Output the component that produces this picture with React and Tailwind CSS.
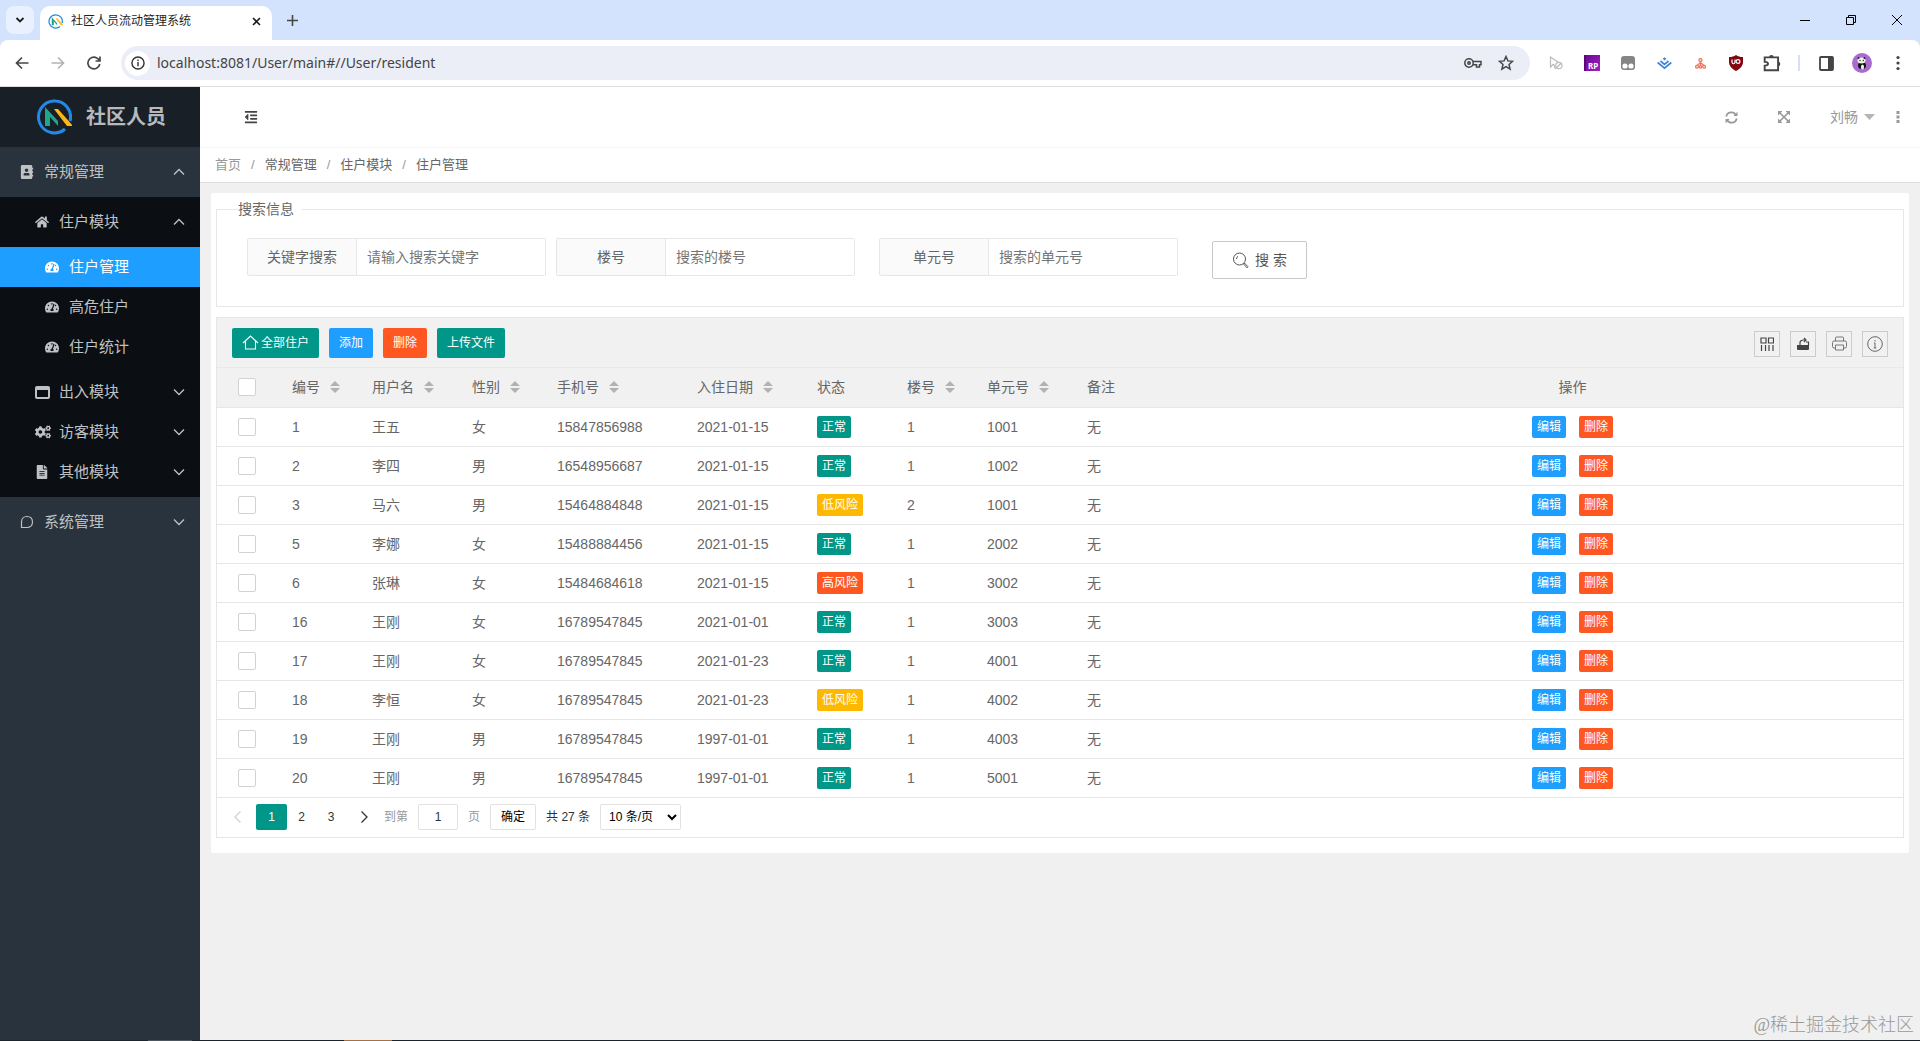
import React from "react";
import { FaAddressBook, FaHome, FaTachometerAlt, FaCogs, FaFileAlt, FaOutdent } from "react-icons/fa";

const Svg = ({ size = 20, box = 24, sw = 2, children, className = "" }) => (
  <svg
    width={size}
    height={size}
    viewBox={`0 0 ${box} ${box}`}
    fill="none"
    stroke="currentColor"
    strokeWidth={sw}
    className={`shrink-0 ${className}`}
    aria-hidden="true"
  >
    {children}
  </svg>
);

const Logo = ({ size }) => (
  <Svg size={size} box={36} sw={3}>
    <path d="M34 22 A16 16 0 1 0 29 30" stroke="#2489e6" />
    <path d="M9 27V8l13 14v5l-8-9v9z" fill="#1fa58a" stroke="none" />
    <path d="M18 10h4l15 17h-6z" fill="#fdb714" stroke="none" />
  </Svg>
);

const Chevron = ({ up }) => (
  <Svg size={12} box={12} sw={1.3}>
    <path d={up ? "M1 8.5 6 3.5 11 8.5" : "M1 3.5 6 8.5 11 3.5"} />
  </Svg>
);

const WindowIcon = () => (
  <Svg size={15} box={15} sw={2}>
    <rect x="1" y="2" width="13" height="11" rx="1" />
    <path d="M1 4h13" />
  </Svg>
);

const LeafIcon = () => (
  <Svg size={14} box={14} sw={1.2}>
    <path d="M1.500 12.500V7C1.500 3.500 4 1.500 7 1.500C11 1.500 12.500 3.500 12.500 7C12.500 10.500 10 12.500 7 12.500z" />
  </Svg>
);

function BrowserChrome() {
  return (
    <header className="shrink-0 bg-[#d3e3fd] font-[Noto_Sans,'Noto_Sans_CJK_SC',sans-serif]">
      <div className="flex h-10 items-end justify-between">
        <div className="flex items-end">
          <button aria-label="搜索标签页" className="mb-1.5 ml-1.5 grid size-7 place-items-center rounded-lg bg-[#e9f0fe] text-[#1f1f1f]">
            <Svg size={10} box={10} sw={1.8}><path d="M1.500 3 5 6.500 8.500 3" /></Svg>
          </button>
          <div className="ml-1.5 flex h-[34px] w-[232px] items-center rounded-t-[10px] bg-white pl-2 pr-2 pb-1">
            <Logo size={15} />
            <span className="ml-2 grow text-[12px] text-[#1f1f1f]">社区人员流动管理系统</span>
            <button aria-label="关闭标签页" className="grid size-4 place-items-center text-[#1f1f1f]">
              <Svg size={9} box={9} sw={1.6}><path d="M1 1l7 7M8 1 1 8" /></Svg>
            </button>
          </div>
          <button aria-label="新标签页" className="mb-3 ml-3 grid size-4 place-items-center text-[#444746]">
            <Svg size={11} box={11} sw={1.6}><path d="M5.500 0v11M0 5.500h11" /></Svg>
          </button>
        </div>
        <div className="flex h-full text-black">
          <button aria-label="最小化" className="grid w-[46px] place-items-center"><Svg size={10} box={10} sw={1}><path d="M0 5.500h10" /></Svg></button>
          <button aria-label="还原" className="grid w-[46px] place-items-center">
            <Svg size={10} box={10} sw={1}><path d="M.5 2.500h7v7h-7zM2.500 2.500v-2h7v7h-2" /></Svg>
          </button>
          <button aria-label="关闭" className="grid w-[46px] place-items-center"><Svg size={10} box={10} sw={1}><path d="M0 0l10 10M10 0 0 10" /></Svg></button>
        </div>
      </div>
      <div className="flex h-[47px] items-center rounded-t-lg border-b border-[#dcdcdc] bg-white pr-1">
        <div className="flex w-[121px] text-[#474747]">
          <button aria-label="后退" className="grid w-9 place-items-center pl-2"><Svg size={14} box={14} sw={1.700}><path d="M13.500 7H2M7 1.500 1.500 7 7 12.500" /></Svg></button>
          <button aria-label="前进" className="grid w-9 place-items-center pl-2 text-[#b4b4b4]"><Svg size={14} box={14} sw={1.700}><path d="M.5 7H12M7 1.500 12.500 7 7 12.500" /></Svg></button>
          <button aria-label="重新加载" className="grid w-9 place-items-center pl-2"><Svg size={14} box={14} sw={1.700}><path d="M12.500 5A6 5.800 0 1 0 12.800 8M13 .5V5H8.500" /></Svg></button>
        </div>
        <div className="flex h-[34px] grow items-center rounded-full bg-[#ebeef7] pl-1 pr-4">
          <span className="grid size-[25px] place-items-center rounded-full bg-white text-[#333]">
            <Svg size={14} box={15} sw={1.500}><circle cx="7.500" cy="7.500" r="6.500" /><path d="M7.500 6.500v4.500M7.500 3.800v1.500" /></Svg>
          </span>
          <input aria-label="地址" defaultValue="localhost:8081/User/main#//User/resident" className="ml-[7px] grow bg-transparent text-[14px] text-[#444] outline-none" />
          <button aria-label="密码" className="text-[#474747]">
            <Svg size={18} box={18} sw={1.500}><circle cx="5" cy="9" r="4.200" /><circle cx="5" cy="9" r="1.200" /><path d="M9 7.500h8v3.300h-1.500v2.200h-3v-2.200H9" /></Svg>
          </button>
          <button aria-label="收藏" className="ml-4 text-[#474747]">
            <Svg size={16} box={16} sw={1.500}><path d="m8 1.500 1.900 4.400 4.700.4-3.600 3.100 1.100 4.700L8 11.600l-4.100 2.500L5 9.400 1.400 6.300l4.700-.4z" /></Svg>
          </button>
        </div>
        <div className="ml-2 flex items-center">
          <button aria-label="禁用指针" className="grid w-9 place-items-center text-[#bbb]">
            <Svg size={14} box={14} sw={1.200}><path d="M4.500 8 1.500 11V1L9 6M4.500 8l2 5" /><circle cx="9.800" cy="9.500" r="3.200" /><path d="m7.500 11.700 4.600-4.500" /></Svg>
          </button>
          <button aria-label="RP" className="grid w-9 place-items-center">
            <span className="flex size-4 items-end justify-center border-l-2 border-[#5a0877] bg-linear-to-br from-[#6a0b94] to-[#a51cc4] text-[8px] leading-[10px] font-bold text-white">RP</span>
          </button>
          <button aria-label="脚本" className="grid w-9 place-items-center">
            <Svg size={14} box={14} sw={0}><rect width="14" height="14" rx="3" fill="#858585" /><circle cx="4" cy="10" r="2.600" fill="#fff" /><circle cx="10" cy="10" r="2.600" fill="#fff" /></Svg>
          </button>
          <button aria-label="掘金" className="grid w-9 place-items-center text-[#3b86dc]">
            <Svg size={15} box={15} sw={1.700}><path d="m.7 6.500 6.800 5.700 6.800-5.700M3.500 5l4 3.300 4-3.300" /><path d="m7.500 1.200 1.800 1.600-1.800 1.600-1.800-1.600z" fill="currentColor" stroke="none" /></Svg>
          </button>
          <button aria-label="结构" className="grid w-9 place-items-center text-[#ee7560]">
            <Svg size={11} box={11} sw={1.300}><circle cx="5.500" cy="2" r="1.500" /><circle cx="2" cy="8.800" r="1.400" /><circle cx="5.500" cy="8.800" r="1.200" /><circle cx="9" cy="8.800" r="1.400" /><path d="M5.500 3v5M2 7.500l3.500-3L9 7.500" /></Svg>
          </button>
          <button aria-label="uBlock" className="grid w-9 place-items-center">
            <Svg size={16} box={16} sw={1.200}><path d="M8 0c2 1.500 4 2 7 2v5c0 4-3 7-7 9-4-2-7-5-7-9V2c3 0 5-.5 7-2z" fill="#800610" stroke="none" /><path d="M4 4.500v3q1.500 2.500 3 0v-3" stroke="#fff" /><circle cx="10" cy="6.500" r="1.900" stroke="#fff" /></Svg>
          </button>
          <button aria-label="扩展程序" className="grid w-9 place-items-center text-[#444]">
            <Svg size={19} box={17} sw={1.700}><path d="M1.500 3h12v11.500h-12v-4q3-.3 3-1.800T1.500 7z" /><path d="M5.500 3a2 2 0 0 1 4 0zM13.500 7a2 2 0 0 1 0 4z" fill="currentColor" stroke="none" /></Svg>
          </button>
          <span className="ml-2 h-4 w-0.5 bg-[#d5e0f8]" />
          <button aria-label="侧边栏" className="ml-2 grid w-9 place-items-center text-[#444]">
            <Svg size={15} box={15} sw={1.800}><rect x="1" y="1" width="13" height="13" rx="1" /><path d="M9 1h5v13H9z" fill="currentColor" stroke="none" /></Svg>
          </button>
          <button aria-label="个人资料" className="grid w-9 place-items-center">
            <Svg size={20} box={20} sw={0}><circle cx="10" cy="10" r="10" fill="#a86bd0" /><ellipse cx="10" cy="12.500" rx="4" ry="3.500" fill="#111" /><ellipse cx="10.500" cy="14" rx="1.600" ry="2.500" fill="#eee" /><ellipse cx="9.500" cy="7.500" rx="4" ry="3" fill="#f2f2e8" /><circle cx="6.500" cy="5" r="1" fill="#222" /><circle cx="12.500" cy="5" r="1" fill="#222" /><circle cx="8" cy="7.500" r=".7" fill="#222" /><circle cx="11.300" cy="7.500" r=".7" fill="#222" /></Svg>
          </button>
          <button aria-label="更多" className="grid w-9 place-items-center text-[#444]">
            <Svg size={16} box={16} sw={0}><g fill="currentColor"><circle cx="8" cy="2.500" r="1.600" /><circle cx="8" cy="8" r="1.600" /><circle cx="8" cy="13.500" r="1.600" /></g></Svg>
          </button>
        </div>
      </div>
    </header>
  );
}

function Group({ icon, label, open }) {
  return (
    <a href="#" className="flex h-10 items-center pl-[35px] pr-[15px]">
      <span className="w-6">{icon}</span>
      <span className="grow">{label}</span>
      <Chevron up={open} />
    </a>
  );
}

function Sidebar() {
  const leaves = ["住户管理", "高危住户", "住户统计"];
  return (
    <nav className="w-[200px] shrink-0 bg-[#29333d] text-[15px] text-[#bfc2c5]">
      <div className="flex h-[60px] items-center bg-[#191f27] pl-9">
        <Logo size={36} />
        <span className="ml-3.5 text-[20px] font-bold text-[#b7b9bc]">社区人员</span>
      </div>
      <a href="#" className="flex h-[50px] items-center pl-5 pr-[15px]">
        <span className="w-6"><FaAddressBook size={14} /></span>
        <span className="grow">常规管理</span>
        <Chevron up />
      </a>
      <div className="bg-[#0b0e12] py-[5px]">
        <Group icon={<FaHome size={14} />} label="住户模块" open />
        <div className="py-[5px]">
          {leaves.map((t, i) => (
            <a key={t} href="#" className={`flex h-10 items-center pl-[45px] ${i === 0 ? "bg-[#1e9fff] text-white" : ""}`}>
              <span className="w-6"><FaTachometerAlt size={14} /></span>
              {t}
            </a>
          ))}
        </div>
        <Group icon={<WindowIcon />} label="出入模块" />
        <Group icon={<FaCogs size={16} />} label="访客模块" />
        <Group icon={<FaFileAlt size={14} />} label="其他模块" />
      </div>
      <a href="#" className="flex h-[50px] items-center pl-5 pr-[15px]">
        <span className="w-6"><LeafIcon /></span>
        <span className="grow">系统管理</span>
        <Chevron />
      </a>
    </nav>
  );
}

function TopBar() {
  return (
    <>
      <div className="flex h-[61px] items-center border-b border-[#f6f6f6] bg-white pl-11 pr-[15px] text-[#999]">
        <button aria-label="收起菜单" className="text-[#444]"><FaOutdent size={14} /></button>
        <button aria-label="刷新" className="ml-auto">
          <Svg size={13} box={13} sw={1.700}><path d="M1.200 5.500A5.300 5.300 0 0 1 11 4M11.800 7.500A5.300 5.300 0 0 1 2 9" /><path d="M12.500.8V5H8.300zM.5 12.200V8h4.200z" fill="currentColor" stroke="none" /></Svg>
        </button>
        <button aria-label="全屏" className="ml-10">
          <Svg size={12} box={12} sw={1.700}><path d="m2 2 8 8M10 2l-8 8" /><path d="M0 0h4.500L0 4.500zM12 0v4.500L7.500 0zM0 12V7.500L4.500 12zM12 12H7.500L12 7.500z" fill="currentColor" stroke="none" /></Svg>
        </button>
        <button className="ml-10 flex items-center gap-1.5">
          刘畅
          <Svg size={11} box={11} sw={0}><path d="M0 2h11L5.500 8z" fill="#b5b5b5" /></Svg>
        </button>
        <button aria-label="更多选项" className="ml-4">
          <Svg size={14} box={14} sw={0}><path d="M5.500 1h3v3h-3zM5.500 5.500h3v3h-3zM5.500 10h3v3h-3z" fill="currentColor" /></Svg>
        </button>
      </div>
      <ol className="flex h-[35px] items-center gap-2.5 border-b border-[#dcdcdc] bg-white pl-[15px] text-[13px] text-[#999]">
        <li><a href="#">首页</a></li>
        {["常规管理", "住户模块", "住户管理"].map((t) => (
          <li key={t} className="flex gap-2.5"><span>/</span><a href="#" className="text-[#666]">{t}</a></li>
        ))}
      </ol>
    </>
  );
}

function Field({ id, label, placeholder }) {
  return (
    <div className="flex h-[38px] w-[299px] rounded-xs border border-[#e6e6e6]">
      <label htmlFor={id} className="grid w-[109px] shrink-0 place-items-center border-r border-[#e6e6e6] bg-[#fafafa]">{label}</label>
      <input id={id} placeholder={placeholder} className="min-w-0 grow bg-white px-2.5 outline-none placeholder:text-[#757575]" />
    </div>
  );
}

const Sort = () => (
  <svg width="10" height="12" viewBox="0 0 10 12" fill="#b2b2b2" className="ml-2.5 inline-block align-[-1px]" aria-hidden="true">
    <path d="M5 0l5 5H0zM0 7h10l-5 5z" />
  </svg>
);

const columns = [
  ["编号", true, "w-20"],
  ["用户名", true, "w-[100px]"],
  ["性别", true, "w-[85px]"],
  ["手机号", true, "w-[140px]"],
  ["入住日期", true, "w-[120px]"],
  ["状态", false, "w-[90px]"],
  ["楼号", true, "w-20"],
  ["单元号", true, "w-[100px]"],
  ["备注", false, "w-[170px]"],
];

const rows = [
  [1, "王五", "女", "15847856988", "2021-01-15", "正常", 1, 1001],
  [2, "李四", "男", "16548956687", "2021-01-15", "正常", 1, 1002],
  [3, "马六", "男", "15464884848", "2021-01-15", "低风险", 2, 1001],
  [5, "李娜", "女", "15488884456", "2021-01-15", "正常", 1, 2002],
  [6, "张琳", "女", "15484684618", "2021-01-15", "高风险", 1, 3002],
  [16, "王刚", "女", "16789547845", "2021-01-01", "正常", 1, 3003],
  [17, "王刚", "女", "16789547845", "2021-01-23", "正常", 1, 4001],
  [18, "李恒", "女", "16789547845", "2021-01-23", "低风险", 1, 4002],
  [19, "王刚", "男", "16789547845", "1997-01-01", "正常", 1, 4003],
  [20, "王刚", "男", "16789547845", "1997-01-01", "正常", 1, 5001],
];

const statusColor = { 正常: "bg-[#009688]", 低风险: "bg-[#ffb800]", 高风险: "bg-[#ff5722]" };

const Check = ({ label }) => (
  <input type="checkbox" aria-label={label} className="block size-[18px] appearance-none rounded-xs border border-[#d2d2d2] bg-white checked:bg-[#009688]" />
);

const ToolButton = ({ label, children }) => (
  <button aria-label={label} className="grid size-[26px] place-items-center border border-[#ccc] text-[#444]">{children}</button>
);

function ResidentTable() {
  return (
    <section className="mt-2.5 border border-[#e6e6e6]">
      <div className="flex h-[50px] items-center gap-2.5 border-b border-[#e9e9e9] bg-[#f1f1f1] px-[15px] text-[12px] text-white">
        <button className="flex h-[30px] items-center gap-0.5 rounded-xs bg-[#009688] px-2.5">
          <Svg size={17} box={17} sw={1.100}><path d="M1 9 8.500 2 16 9M3.500 7v8h10V7" /></Svg>
          全部住户
        </button>
        <button className="h-[30px] rounded-xs bg-[#1e9fff] px-2.5">添加</button>
        <button className="h-[30px] rounded-xs bg-[#ff5722] px-2.5">删除</button>
        <button className="h-[30px] rounded-xs bg-[#009688] px-2.5">上传文件</button>
        <div className="ml-auto flex gap-2.5 pt-0.5">
          <ToolButton label="筛选列">
            <Svg size={14} box={14} sw={1.200}><path d="M1 1h5v5H1zM8.500 1h5v5h-5zM1.500 8v6M5.500 8v6M9 8v6M13 8v6" /></Svg>
          </ToolButton>
          <ToolButton label="导出">
            <Svg size={14} box={14} sw={1.200}><path d="M1 8h12v4q0 1-1 1H2q-1 0-1-1z" fill="currentColor" stroke="none" /><path d="M4 8V5.500Q4 3.500 7 3h2M8 1l2 2-2 2M10 5h2.500v4" /></Svg>
          </ToolButton>
          <ToolButton label="打印">
            <Svg size={15} box={15} sw={1} className="text-[#777]"><path d="M3.500 5V2q0-1 1-1h6q1 0 1 1v3M3.500 12H2q-1.500 0-1.500-1.500v-4Q.5 5 2 5h11q1.500 0 1.500 1.500v4Q14.500 12 13 12h-1.500M3.500 9h8v5h-8z" /></Svg>
          </ToolButton>
          <ToolButton label="提示">
            <Svg size={16} box={16} sw={1} className="text-[#666]"><circle cx="8" cy="8" r="7.300" /><path d="M8 7v5M8 4v1.500M7 7h1M6.800 12h2.400" /></Svg>
          </ToolButton>
        </div>
      </div>
      <table className="w-full table-fixed border-collapse text-left">
        <thead className="bg-[#f1f1f1]">
          <tr className="h-[39px] border-b border-[#e6e6e6]">
            <th className="w-[60px] pl-[21px]"><Check label="全选" /></th>
            {columns.map(([name, sortable, width]) => (
              <th key={name} className={`px-[15px] font-normal whitespace-nowrap ${width}`}>
                {name}
                {sortable && <Sort />}
              </th>
            ))}
            <th className="text-center font-normal">操作</th>
          </tr>
        </thead>
        <tbody>
          {rows.map((r) => (
            <tr key={r[0]} className="h-[39px] border-b border-[#e6e6e6]">
              <td className="pl-[21px]"><Check label={`选择 ${r[0]}`} /></td>
              {[...r, "无"].map((v, i) => (
                <td key={i} className="px-[15px] whitespace-nowrap">
                  {i === 5 ? <span className={`inline-block h-[22px] rounded-xs px-[5px] text-[12px] leading-[22px] text-white ${statusColor[v]}`}>{v}</span> : v}
                </td>
              ))}
              <td>
                <div className="flex justify-center gap-[13px] text-[12px] text-white">
                  <button className="h-[22px] rounded-xs bg-[#1e9fff] px-[5px]">编辑</button>
                  <button className="h-[22px] rounded-xs bg-[#ff5722] px-[5px]">删除</button>
                </div>
              </td>
            </tr>
          ))}
        </tbody>
      </table>
      <div className="flex h-[39px] items-center pl-[15px] text-[12px] text-[#333]">
        <button aria-label="上一页" className="text-[#d2d2d2]"><Svg size={12} box={12} sw={1.300}><path d="M8.500.5 3 6l5.500 5.500" /></Svg></button>
        <button className="ml-3 h-[26px] w-[31px] rounded-xs bg-[#009688] text-white">1</button>
        <button className="h-[26px] w-[29px]">2</button>
        <button className="h-[26px] w-[30px]">3</button>
        <button aria-label="下一页" className="ml-3"><Svg size={12} box={12} sw={1.300}><path d="m3.500.5 5.500 5.500-5.500 5.500" /></Svg></button>
        <label htmlFor="page" className="ml-3.5 text-[#999]">到第</label>
        <input id="page" defaultValue="1" className="ml-2.5 h-[26px] w-10 rounded-xs border border-[#e2e2e2] text-center outline-none" />
        <span className="ml-2.5 text-[#999]">页</span>
        <button className="ml-2.5 h-[26px] rounded-xs border border-[#e2e2e2] px-2.5 text-black">确定</button>
        <span className="ml-2.5">共 27 条</span>
        <select aria-label="每页条数" className="ml-2.5 h-[26px] w-[81px] rounded-xs border border-[#e2e2e2] bg-white pl-1 text-black">
          <option>10 条/页</option>
          <option>20 条/页</option>
        </select>
      </div>
    </section>
  );
}

export default function App() {
  return (
    <div className="relative flex min-h-screen flex-col bg-[#f0f0f0] font-['Liberation_Sans','Noto_Sans_CJK_SC',sans-serif] text-[14px] leading-5 text-[#666]">
      <BrowserChrome />
      <div className="flex grow">
        <Sidebar />
        <main className="min-w-0 grow">
          <TopBar />
          <div className="mx-[11px] mt-2.5 rounded-xs bg-white px-[5px] pt-1.5 pb-[15px]">
            <fieldset className="border border-[#e6e6e6]">
              <legend className="ml-[21px] pr-2">搜索信息</legend>
              <div className="flex pt-[19px] pb-[30px] pl-[30px]">
                <Field id="keyword" label="关键字搜索" placeholder="请输入搜索关键字" />
                <div className="ml-2.5"><Field id="building" label="楼号" placeholder="搜索的楼号" /></div>
                <div className="ml-6"><Field id="unit" label="单元号" placeholder="搜索的单元号" /></div>
                <button className="mt-[3px] -mb-[3px] ml-[34px] flex h-[38px] w-[95px] items-center justify-center gap-1.5 rounded-xs border border-[#c9c9c9] text-[#555]">
                  <Svg size={17} box={17} sw={1}><circle cx="7.500" cy="7" r="6" /><path d="M4.500 7a3 3 0 0 1 1.500-2.700M11.500 12l1-1 3.500 3.800-1 1z" /></Svg>
                  搜 索
                </button>
              </div>
            </fieldset>
            <ResidentTable />
          </div>
        </main>
      </div>
      <div className="flex h-px shrink-0 bg-[#1b242c]">
        <span className="ml-[148px] w-11 bg-[#4b5661]" />
        <span className="ml-[152px] w-12 bg-[#a9713f]" />
      </div>
      <p className="absolute right-1.5 bottom-1 font-['Liberation_Serif','Noto_Sans_CJK_SC',serif] text-[18px] leading-6 font-light text-[#999]">@稀土掘金技术社区</p>
    </div>
  );
}
